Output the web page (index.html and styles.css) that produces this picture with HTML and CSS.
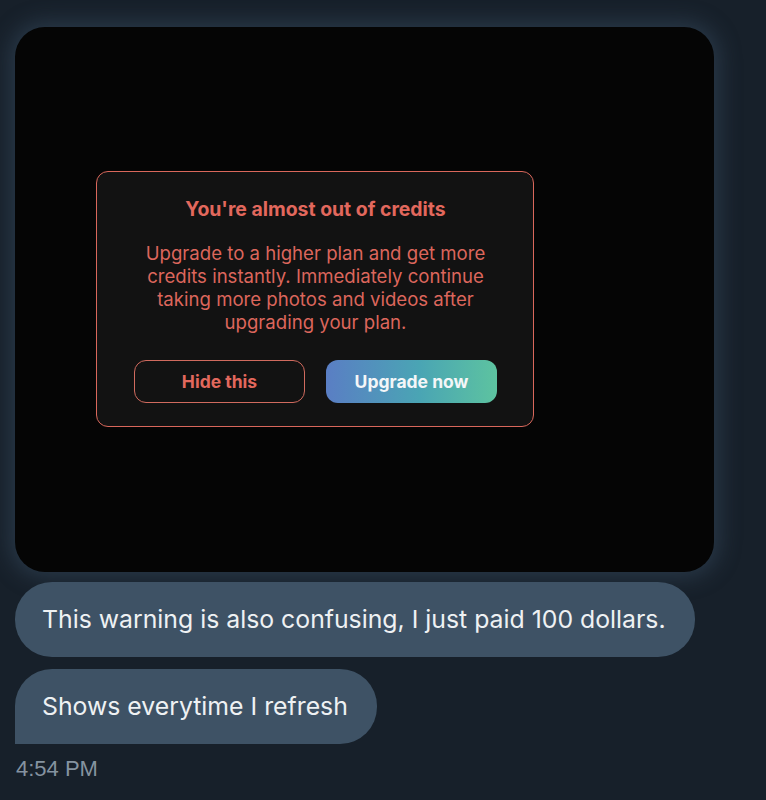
FILE: index.html
```html
<!DOCTYPE html>
<html>
<head>
<meta charset="utf-8">
<link rel="stylesheet" href="styles.css">
</head>
<body>
<div class="chat">
  <div class="media">
    <div class="modal">
      <div class="modal-title">You're almost out of credits</div>
      <p class="modal-body">Upgrade to a higher plan and get more credits instantly. Immediately continue taking more photos and videos after upgrading your plan.</p>
      <div class="modal-actions">
        <div class="btn btn-outline">Hide this</div>
        <div class="btn btn-grad">Upgrade now</div>
      </div>
    </div>
  </div>
  <div class="bubble b1">This warning is also confusing, I just paid 100 dollars.</div>
  <div class="bubble b2">Shows everytime I refresh</div>
  <div class="time">4:54 PM</div>
</div>
</body>
</html>
```
FILE: styles.css
```css
html, body { margin: 0; padding: 0; }
body {
  background: #17202a;
  width: 766px;
  height: 800px;
  overflow: hidden;
}
.chat {
  padding: 27px 0 0 15px;
  display: flex;
  flex-direction: column;
  align-items: flex-start;
}
.media {
  width: 699px;
  height: 545px;
  box-sizing: border-box;
  background: #050505;
  border-radius: 30px;
  padding: 144px 0 0 81px;
  box-shadow: 0 0 22px 5px rgba(70, 95, 120, 0.4);
}
.modal {
  width: 438px;
  height: 256px;
  box-sizing: border-box;
  border: 1px solid #d9675b;
  border-radius: 12px;
  background: #121212;
  padding: 26px 36px 0 37px;
  font-family: Inter, "Noto Sans", sans-serif;
  text-align: center;
  color: #e2685d;
}
.modal-title {
  font-weight: 700;
  font-size: 19.4px;
  line-height: 22px;
}
.modal-body {
  margin: 22px auto 0 auto;
  max-width: 356px;
  font-size: 18.6px;
  line-height: 23px;
  color: #dc665c;
}
.modal-actions {
  display: flex;
  gap: 21px;
  margin-top: 26px;
}
.btn {
  width: 172px;
  height: 43px;
  box-sizing: border-box;
  border-radius: 12px;
  display: flex;
  align-items: center;
  justify-content: center;
  font-weight: 700;
  font-size: 17.5px;
}
.btn-outline {
  border: 1px solid #d06a5e;
  color: #e2685d;
}
.btn-grad {
  background: linear-gradient(90deg, #5a7ec4 0%, #4aa5b4 55%, #5dc3a0 100%);
  color: #f4f6f8;
}
.bubble {
  background: #3e5265;
  color: #eef1f3;
  font-family: Inter, "Noto Sans", sans-serif;
  font-size: 24.8px;
  line-height: 29px;
  padding: 23px 29px 23px 27px;
  border-radius: 37px;
}
.b1 { margin-top: 10px; }
.b2 { margin-top: 12px; border-bottom-left-radius: 0; }
.time {
  margin-top: 12px;
  margin-left: 1px;
  font-family: "Liberation Sans", Arial, sans-serif;
  font-size: 22px;
  line-height: 26px;
  color: #8593a0;
}
```
